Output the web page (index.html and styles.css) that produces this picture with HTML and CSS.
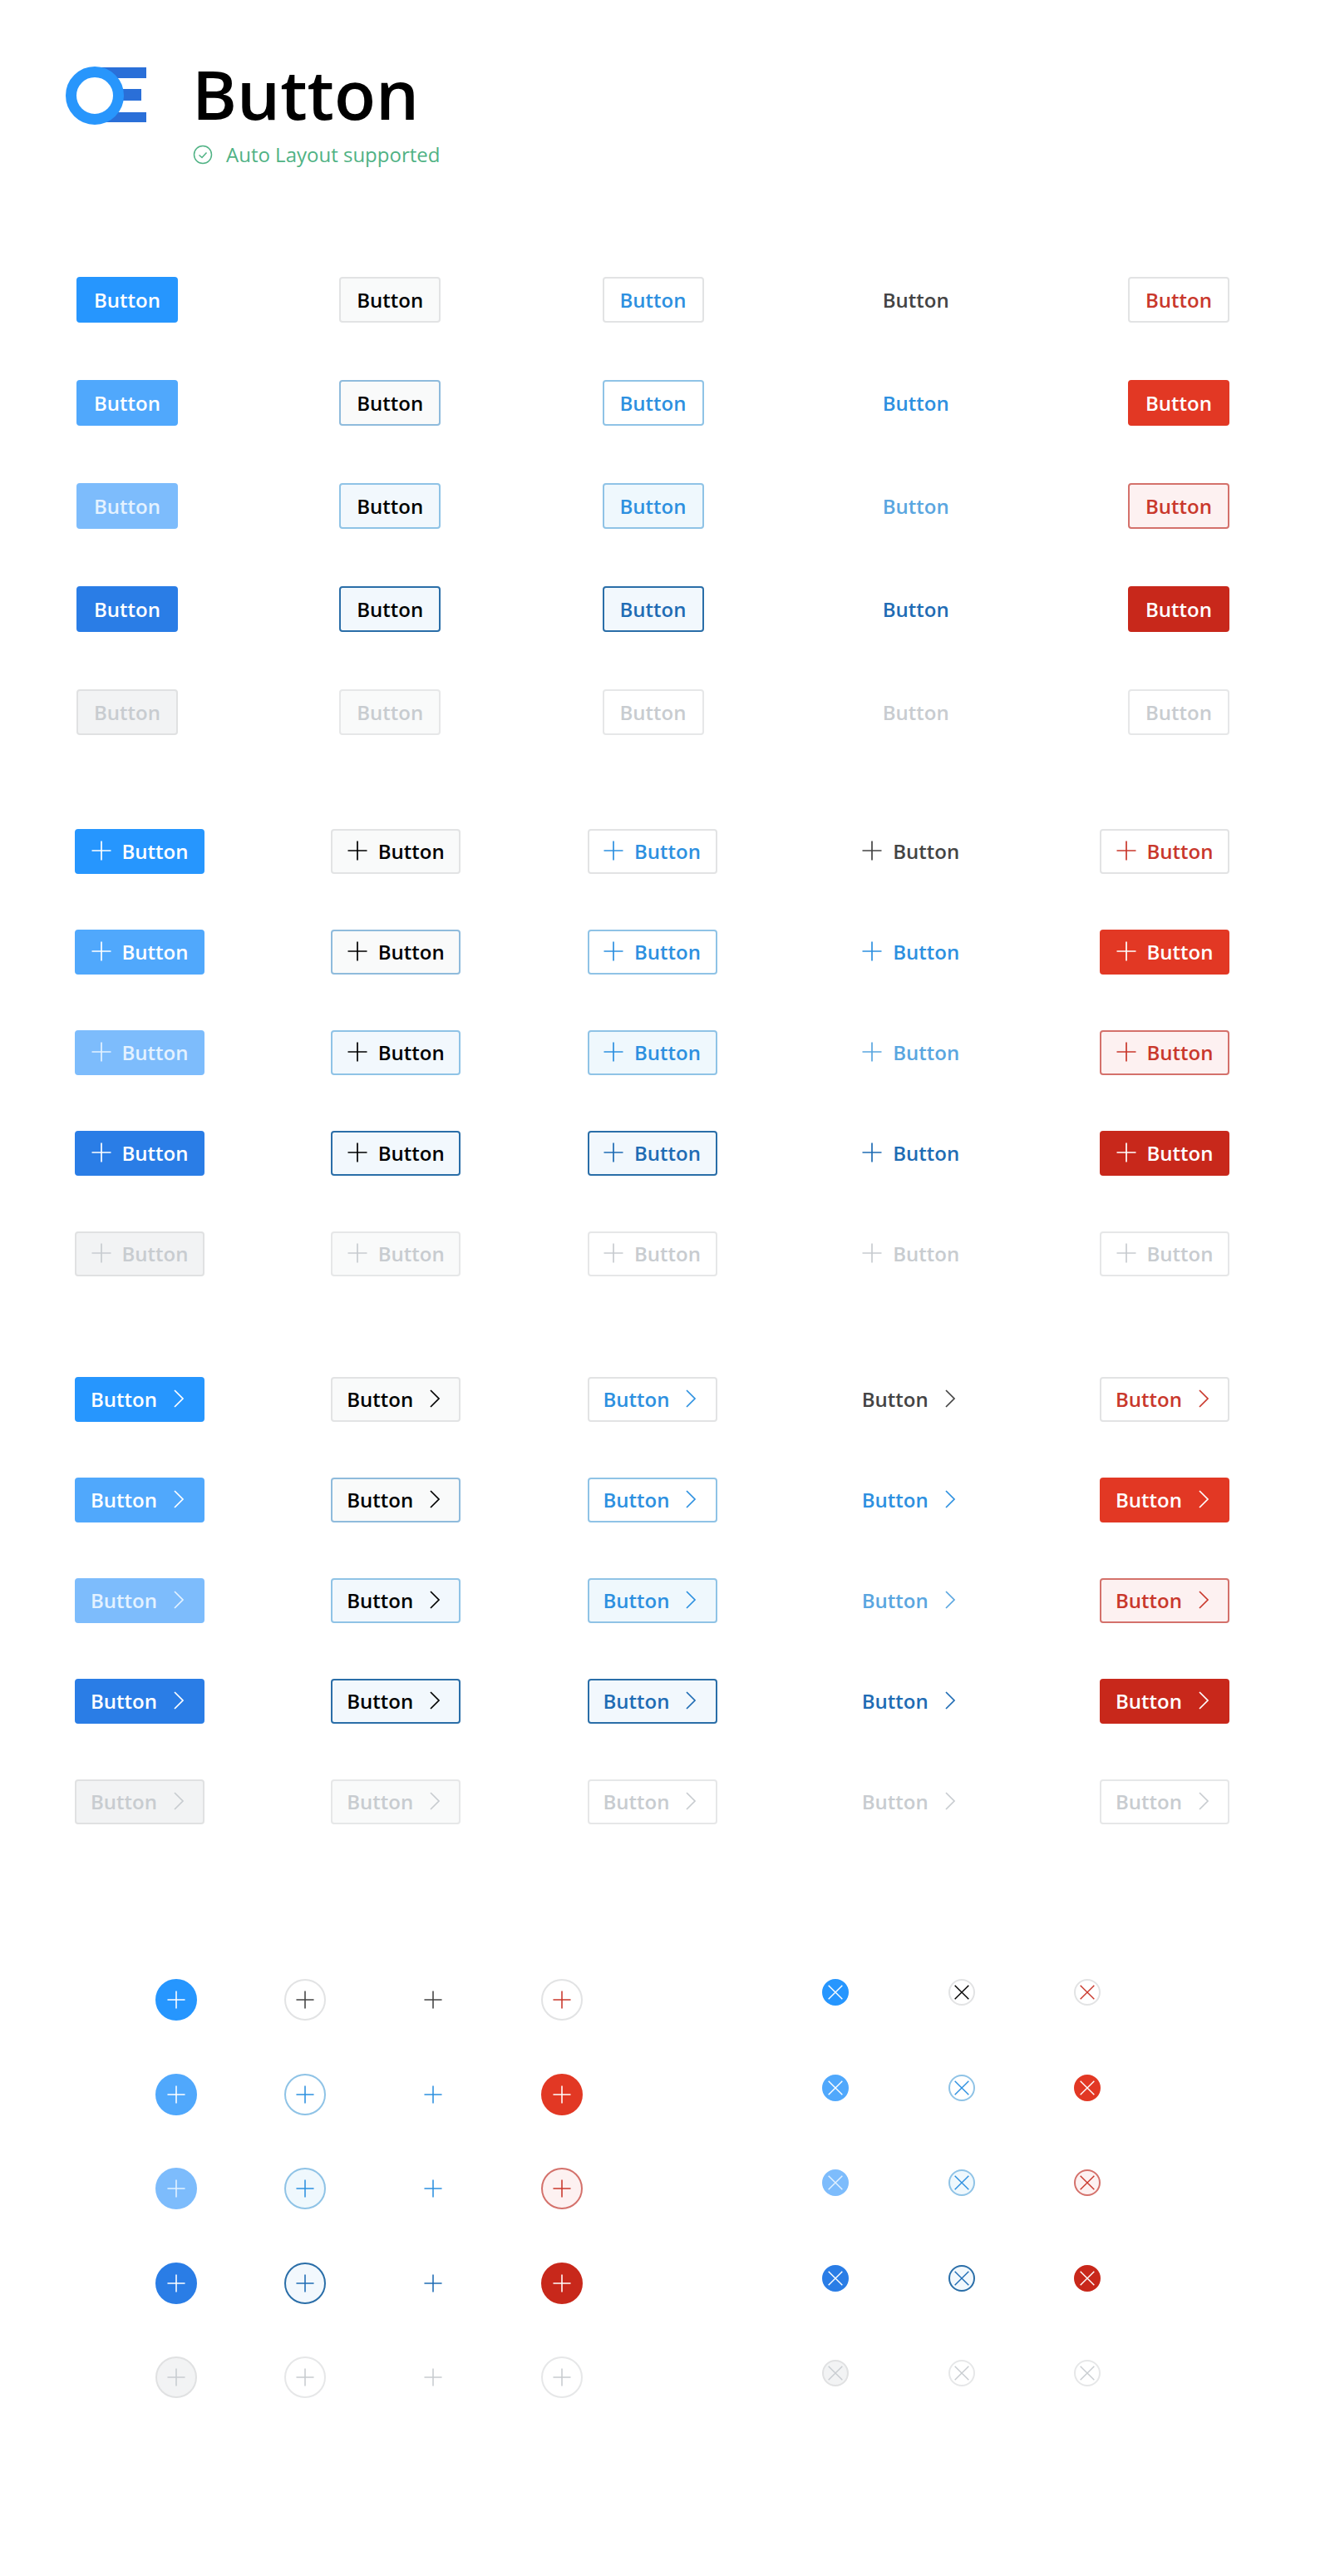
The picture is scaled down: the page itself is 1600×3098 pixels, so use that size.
FILE: index.html
```html
<!DOCTYPE html>
<html lang="en">
<head>
  <meta charset="UTF-8">
  <title>Button</title>
  <meta name="viewport" content="width=device-width, initial-scale=1.0">
  <link rel="stylesheet" href="styles.css">
</head>
<body>

  <!-- shared icons -->
  <svg class="defs" aria-hidden="true">
    <symbol id="plus" viewBox="0 0 24 24"><path d="M12 0.5V23.5M0.5 12H23.5"/></symbol>
    <symbol id="chevron" viewBox="0 0 24 24"><path d="M7 2L17 12L7 22"/></symbol>
    <symbol id="cross" viewBox="0 0 24 24"><path d="M2 2L22 22M22 2L2 22"/></symbol>
  </svg>

  <header class="header">
    <svg class="logo" viewBox="0 0 100 72">
      <path class="logo-bars" d="M40 2H97V15H40ZM60 28H91V42H60ZM40 56H97V68H40Z"/>
      <circle class="logo-ring" cx="35" cy="36" r="28.5" />
    </svg>
    <div>
      <h1>Button</h1>
      <p class="support">
        <svg class="check" viewBox="0 0 24 24"><circle cx="12" cy="12" r="10.5"/><path d="M7.5 12.5L11 15.5L16.5 9.5"/></svg>
        Auto Layout supported
      </p>
    </div>
  </header>

  <!-- text only -->
  <section class="grid grid-text">
    <a class="btn primary">Button</a>
    <a class="btn default">Button</a>
    <a class="btn outline">Button</a>
    <a class="btn ghost">Button</a>
    <a class="btn danger-outline">Button</a>

    <a class="btn primary hover">Button</a>
    <a class="btn default hover">Button</a>
    <a class="btn outline hover">Button</a>
    <a class="btn ghost hover">Button</a>
    <a class="btn danger">Button</a>

    <a class="btn primary light">Button</a>
    <a class="btn default light">Button</a>
    <a class="btn outline light">Button</a>
    <a class="btn ghost light">Button</a>
    <a class="btn danger-outline light">Button</a>

    <a class="btn primary pressed">Button</a>
    <a class="btn default pressed">Button</a>
    <a class="btn outline pressed">Button</a>
    <a class="btn ghost pressed">Button</a>
    <a class="btn danger pressed">Button</a>

    <a class="btn primary off">Button</a>
    <a class="btn default off">Button</a>
    <a class="btn outline off">Button</a>
    <a class="btn ghost off">Button</a>
    <a class="btn danger-outline off">Button</a>
  </section>

  <!-- icon on the left -->
  <section class="grid grid-icon grid-plus">
    <a class="btn primary"><svg class="ico"><use href="#plus"/></svg>Button</a>
    <a class="btn default"><svg class="ico"><use href="#plus"/></svg>Button</a>
    <a class="btn outline"><svg class="ico"><use href="#plus"/></svg>Button</a>
    <a class="btn ghost"><svg class="ico"><use href="#plus"/></svg>Button</a>
    <a class="btn danger-outline"><svg class="ico"><use href="#plus"/></svg>Button</a>

    <a class="btn primary hover"><svg class="ico"><use href="#plus"/></svg>Button</a>
    <a class="btn default hover"><svg class="ico"><use href="#plus"/></svg>Button</a>
    <a class="btn outline hover"><svg class="ico"><use href="#plus"/></svg>Button</a>
    <a class="btn ghost hover"><svg class="ico"><use href="#plus"/></svg>Button</a>
    <a class="btn danger"><svg class="ico"><use href="#plus"/></svg>Button</a>

    <a class="btn primary light"><svg class="ico"><use href="#plus"/></svg>Button</a>
    <a class="btn default light"><svg class="ico"><use href="#plus"/></svg>Button</a>
    <a class="btn outline light"><svg class="ico"><use href="#plus"/></svg>Button</a>
    <a class="btn ghost light"><svg class="ico"><use href="#plus"/></svg>Button</a>
    <a class="btn danger-outline light"><svg class="ico"><use href="#plus"/></svg>Button</a>

    <a class="btn primary pressed"><svg class="ico"><use href="#plus"/></svg>Button</a>
    <a class="btn default pressed"><svg class="ico"><use href="#plus"/></svg>Button</a>
    <a class="btn outline pressed"><svg class="ico"><use href="#plus"/></svg>Button</a>
    <a class="btn ghost pressed"><svg class="ico"><use href="#plus"/></svg>Button</a>
    <a class="btn danger pressed"><svg class="ico"><use href="#plus"/></svg>Button</a>

    <a class="btn primary off"><svg class="ico"><use href="#plus"/></svg>Button</a>
    <a class="btn default off"><svg class="ico"><use href="#plus"/></svg>Button</a>
    <a class="btn outline off"><svg class="ico"><use href="#plus"/></svg>Button</a>
    <a class="btn ghost off"><svg class="ico"><use href="#plus"/></svg>Button</a>
    <a class="btn danger-outline off"><svg class="ico"><use href="#plus"/></svg>Button</a>
  </section>

  <!-- icon on the right -->
  <section class="grid grid-icon grid-chevron">
    <a class="btn primary">Button<svg class="ico"><use href="#chevron"/></svg></a>
    <a class="btn default">Button<svg class="ico"><use href="#chevron"/></svg></a>
    <a class="btn outline">Button<svg class="ico"><use href="#chevron"/></svg></a>
    <a class="btn ghost">Button<svg class="ico"><use href="#chevron"/></svg></a>
    <a class="btn danger-outline">Button<svg class="ico"><use href="#chevron"/></svg></a>

    <a class="btn primary hover">Button<svg class="ico"><use href="#chevron"/></svg></a>
    <a class="btn default hover">Button<svg class="ico"><use href="#chevron"/></svg></a>
    <a class="btn outline hover">Button<svg class="ico"><use href="#chevron"/></svg></a>
    <a class="btn ghost hover">Button<svg class="ico"><use href="#chevron"/></svg></a>
    <a class="btn danger">Button<svg class="ico"><use href="#chevron"/></svg></a>

    <a class="btn primary light">Button<svg class="ico"><use href="#chevron"/></svg></a>
    <a class="btn default light">Button<svg class="ico"><use href="#chevron"/></svg></a>
    <a class="btn outline light">Button<svg class="ico"><use href="#chevron"/></svg></a>
    <a class="btn ghost light">Button<svg class="ico"><use href="#chevron"/></svg></a>
    <a class="btn danger-outline light">Button<svg class="ico"><use href="#chevron"/></svg></a>

    <a class="btn primary pressed">Button<svg class="ico"><use href="#chevron"/></svg></a>
    <a class="btn default pressed">Button<svg class="ico"><use href="#chevron"/></svg></a>
    <a class="btn outline pressed">Button<svg class="ico"><use href="#chevron"/></svg></a>
    <a class="btn ghost pressed">Button<svg class="ico"><use href="#chevron"/></svg></a>
    <a class="btn danger pressed">Button<svg class="ico"><use href="#chevron"/></svg></a>

    <a class="btn primary off">Button<svg class="ico"><use href="#chevron"/></svg></a>
    <a class="btn default off">Button<svg class="ico"><use href="#chevron"/></svg></a>
    <a class="btn outline off">Button<svg class="ico"><use href="#chevron"/></svg></a>
    <a class="btn ghost off">Button<svg class="ico"><use href="#chevron"/></svg></a>
    <a class="btn danger-outline off">Button<svg class="ico"><use href="#chevron"/></svg></a>
  </section>

  <!-- round icon buttons -->
  <section class="rounds">
    <div class="round-grid plus-grid">
      <a class="round primary"><svg class="ico"><use href="#plus"/></svg></a>
      <a class="round default"><svg class="ico"><use href="#plus"/></svg></a>
      <a class="round ghost"><svg class="ico"><use href="#plus"/></svg></a>
      <a class="round danger-outline"><svg class="ico"><use href="#plus"/></svg></a>

      <a class="round primary hover"><svg class="ico"><use href="#plus"/></svg></a>
      <a class="round outline hover"><svg class="ico"><use href="#plus"/></svg></a>
      <a class="round ghost hover"><svg class="ico"><use href="#plus"/></svg></a>
      <a class="round danger"><svg class="ico"><use href="#plus"/></svg></a>

      <a class="round primary light"><svg class="ico"><use href="#plus"/></svg></a>
      <a class="round outline light"><svg class="ico"><use href="#plus"/></svg></a>
      <a class="round ghost hover"><svg class="ico"><use href="#plus"/></svg></a>
      <a class="round danger-outline light"><svg class="ico"><use href="#plus"/></svg></a>

      <a class="round primary pressed"><svg class="ico"><use href="#plus"/></svg></a>
      <a class="round outline pressed"><svg class="ico"><use href="#plus"/></svg></a>
      <a class="round ghost pressed"><svg class="ico"><use href="#plus"/></svg></a>
      <a class="round danger pressed"><svg class="ico"><use href="#plus"/></svg></a>

      <a class="round primary off"><svg class="ico"><use href="#plus"/></svg></a>
      <a class="round outline off"><svg class="ico"><use href="#plus"/></svg></a>
      <a class="round ghost off"><svg class="ico"><use href="#plus"/></svg></a>
      <a class="round danger-outline off"><svg class="ico"><use href="#plus"/></svg></a>
    </div>

    <div class="round-grid cross-grid">
      <a class="round primary"><svg class="ico"><use href="#cross"/></svg></a>
      <a class="round default"><svg class="ico"><use href="#cross"/></svg></a>
      <a class="round danger-outline"><svg class="ico"><use href="#cross"/></svg></a>

      <a class="round primary hover"><svg class="ico"><use href="#cross"/></svg></a>
      <a class="round outline hover"><svg class="ico"><use href="#cross"/></svg></a>
      <a class="round danger"><svg class="ico"><use href="#cross"/></svg></a>

      <a class="round primary light"><svg class="ico"><use href="#cross"/></svg></a>
      <a class="round outline light"><svg class="ico"><use href="#cross"/></svg></a>
      <a class="round danger-outline light"><svg class="ico"><use href="#cross"/></svg></a>

      <a class="round primary pressed"><svg class="ico"><use href="#cross"/></svg></a>
      <a class="round outline pressed"><svg class="ico"><use href="#cross"/></svg></a>
      <a class="round danger pressed"><svg class="ico"><use href="#cross"/></svg></a>

      <a class="round primary off"><svg class="ico"><use href="#cross"/></svg></a>
      <a class="round outline off"><svg class="ico"><use href="#cross"/></svg></a>
      <a class="round danger-outline off"><svg class="ico"><use href="#cross"/></svg></a>
    </div>
  </section>

</body>
</html>
```

FILE: styles.css
```css
* {
  box-sizing: border-box;
  font-family: "Open Sans", sans-serif;
}
body {
  margin: 0;
  background: #fff;
  color: #000;
}
.defs {
  display: none;
}

/* header */
.header {
  display: flex;
  align-items: flex-start;
  padding: 55px 0 0 79px;
  height: 333px;
}
.logo {
  width: 100px;
  height: 72px;
  margin: 24px 52px 0 0;
}
.logo-bars {
  fill: #2a6fd8;
}
.logo-ring {
  fill: #fff;
  stroke: #2896fc;
  stroke-width: 13;
}
h1 {
  margin: 0;
  font-size: 82px;
  font-weight: 600;
  line-height: 114px;
}
.support {
  display: flex;
  align-items: center;
  gap: 16px;
  margin: 1px 0 0 1px;
  font-size: 24px;
  line-height: 32px;
  color: #4fb284;
}
.check {
  width: 24px;
  height: 24px;
  fill: none;
  stroke: #4fb284;
  stroke-width: 1.5;
}

/* button grids */
.grid {
  display: grid;
  justify-content: space-between;
}
.grid-text {
  grid-template-columns: repeat(5, 122px);
  grid-auto-rows: 55px;
  row-gap: 69px;
  margin: 0 121px 0 92px;
}
.grid-icon {
  grid-template-columns: repeat(5, 156px);
  grid-auto-rows: 54px;
  row-gap: 67px;
  margin: 0 121px 0 90px;
}
.grid-plus {
  margin-top: 113px;
}
.grid-chevron {
  margin-top: 121px;
}

.btn {
  display: flex;
  align-items: center;
  justify-content: center;
  border: 2px solid transparent;
  border-radius: 4px;
  font-size: 24px;
  font-weight: 600;
}
.grid-icon .btn {
  padding-bottom: 2px;
}
.grid-icon .btn.ghost {
  padding-left: 6px;
}
.round {
  display: flex;
  align-items: center;
  justify-content: center;
  border: 2px solid transparent;
  border-radius: 50%;
}
.ico {
  flex: none;
  fill: none;
  stroke: currentColor;
  stroke-width: 1.7;
}
.grid-plus .ico {
  width: 24px;
  height: 24px;
  margin-right: 13px;
}
.grid-chevron .ico {
  width: 24px;
  height: 24px;
  margin-left: 14px;
}

/* blue filled */
.primary {
  background: #2696fe;
  border-color: #2696fe;
  color: #fff;
}
.primary.hover {
  background: #50a8fc;
  border-color: #50a8fc;
  color: #fff;
}
.primary.light {
  background: #7dbcfc;
  border-color: #7dbcfc;
  color: #e4f2ff;
}
.primary.pressed {
  background: #2a7de6;
  border-color: #2a7de6;
  color: #fff;
}
.primary.off {
  background: #f2f3f4;
  border-color: #e0e1e2;
  color: #c8ccd0;
}

/* grey with black text */
.default {
  background: #f9fafa;
  border-color: #e2e3e4;
  color: #000;
}
.default.hover {
  border-color: #8fbbdc;
}
.default.light {
  background: #f2f8fd;
  border-color: #8fc3e6;
}
.default.pressed {
  background: #f2f8fd;
  border-color: #2a6ea8;
}
.default.off {
  background: #f9fafa;
  border-color: #e6e7e8;
  color: #c8ccd0;
}
.round.default {
  background: #fff;
}
.plus-grid .default {
  color: #444;
}

/* white with blue text */
.outline {
  background: #fff;
  border-color: #e2e3e4;
  color: #2d90e0;
}
.outline.hover {
  border-color: #8fc3e6;
}
.outline.light {
  background: #eff8fd;
  border-color: #8fc3e6;
}
.outline.pressed {
  background: #f2f8fd;
  border-color: #2a6ea8;
  color: #1f6cb4;
}
.outline.off {
  border-color: #e6e7e8;
  color: #c8ccd0;
}

/* no border */
.ghost {
  color: #444;
}
.ghost.hover {
  color: #2d90e0;
}
.ghost.light {
  color: #5aa6e0;
}
.ghost.pressed {
  color: #1f6cb4;
}
.ghost.off {
  color: #c8ccd0;
}

/* red */
.danger {
  background: #e23824;
  border-color: #e23824;
  color: #fff;
}
.danger.pressed {
  background: #c8281b;
  border-color: #c8281b;
}
.danger-outline {
  background: #fff;
  border-color: #e2e3e4;
  color: #c9382c;
}
.danger-outline.light {
  background: #fdf1f1;
  border-color: #d4716b;
}
.danger-outline.off {
  border-color: #e6e7e8;
  color: #c8ccd0;
}

/* round buttons */
.rounds {
  display: flex;
  margin: 186px 0 0 187px;
}
.round-grid {
  display: grid;
}
.plus-grid {
  grid-template-columns: repeat(4, 50px);
  grid-auto-rows: 50px;
  column-gap: 104.5px;
  row-gap: 63.5px;
}
.cross-grid {
  grid-template-columns: repeat(3, 32px);
  grid-auto-rows: 32px;
  column-gap: 119.5px;
  row-gap: 82.5px;
  margin-left: 288.5px;
}
.plus-grid .ico {
  width: 22px;
  height: 22px;
}
.cross-grid .ico {
  width: 20px;
  height: 20px;
}
```
